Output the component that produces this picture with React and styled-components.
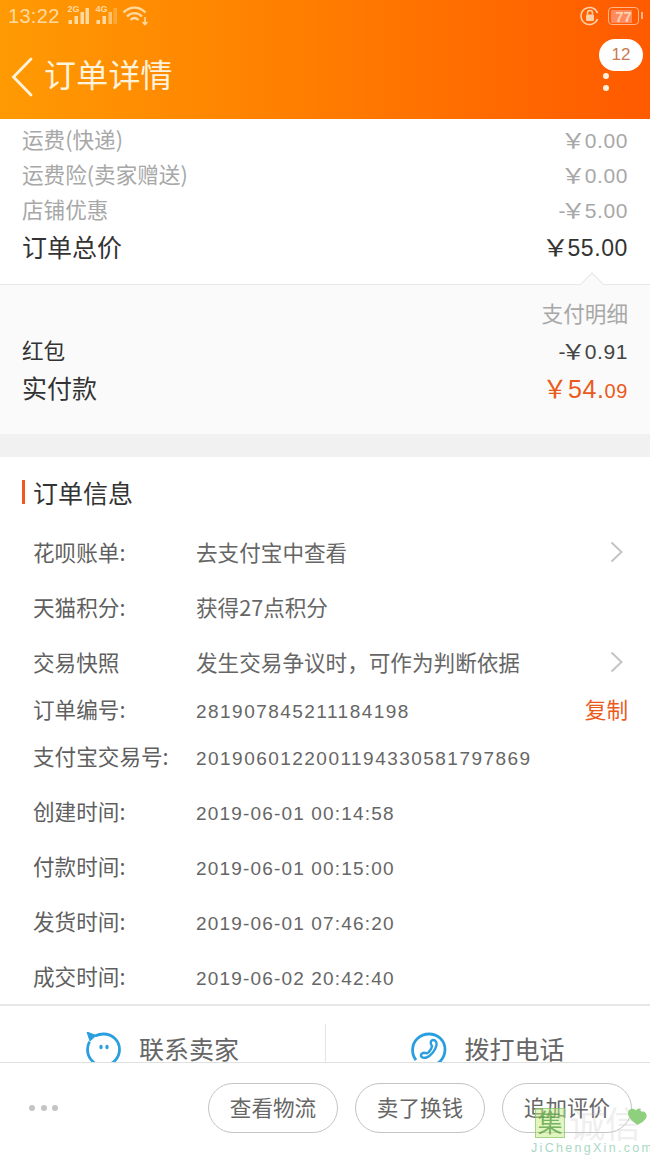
import React from "react";
import styled, { createGlobalStyle } from "styled-components";

const FONT = `"Noto Sans CJK SC", "Liberation Sans", sans-serif`;
const NUM = `"Liberation Sans", "Noto Sans CJK SC", sans-serif`;

const GlobalStyle = createGlobalStyle`
  html, body { margin: 0; padding: 0; background: #fff; }
  body { font-family: ${FONT}; }
`;

const Page = styled.div`
  position: relative;
  width: 650px;
  height: 1155px;
  overflow: hidden;
  display: flex;
  flex-direction: column;
  background: #fff;
`;

const Header = styled.header`
  height: 119px;
  flex: none;
  background: linear-gradient(90deg, #ff9a03 0%, #ff7f00 45%, #ff5a00 100%);
  display: flex;
  flex-direction: column;
  box-sizing: border-box;
`;

const StatusBar = styled.div`
  height: 32px;
  padding: 0 9px 0 8px;
  display: flex;
  align-items: center;
  color: #ffd9a0;
`;

const Clock = styled.span`
  font: 20px ${NUM};
  letter-spacing: 0.3px;
  margin-right: 7px;
`;

const StatusRight = styled.div`
  margin-left: auto;
  display: flex;
  align-items: center;
  gap: 8px;
`;

const Battery = styled.div`
  width: 31px;
  height: 18px;
  margin-right: 2px;
  box-sizing: border-box;
  border: 1.5px solid #ffb48a;
  border-radius: 4px;
  position: relative;
  display: flex;
  align-items: center;
  justify-content: center;
  font: bold 15px ${NUM};
  color: #ffd2ad;
  background: linear-gradient(90deg, #ff8a60 80%, transparent 80%);
  background-clip: content-box;
  padding: 1.5px 2px;
  &::after {
    content: "";
    position: absolute;
    right: -4.5px;
    top: 4px;
    width: 2px;
    height: 7px;
    background: #ffb48a;
  }
`;

const NavBar = styled.div`
  flex: 1;
  display: flex;
  align-items: flex-start;
  padding: 22px 7px 0 11px;
`;

const Back = styled.svg`
  width: 22px;
  height: 40px;
  margin-top: 3px;
  margin-right: 11px;
`;

const Title = styled.h1`
  margin: -3px 0 0;
  font: 400 32px/44px ${FONT};
  color: #fff3dc;
  letter-spacing: 0.2px;
`;

const More = styled.div`
  margin-left: auto;
  width: 44px;
  display: flex;
  flex-direction: column;
  align-items: center;
  margin-top: -15px;
`;

const Badge = styled.div`
  width: 44px;
  height: 32px;
  border-radius: 16px;
  background: #fff;
  color: #c87a55;
  font: 17px/32px ${NUM};
  text-align: center;
`;

const Dot = styled.i`
  display: block;
  width: 6px;
  height: 6px;
  border-radius: 50%;
  background: #fff0dc;
  margin-top: 6px;
  margin-right: 30px;
  &:first-of-type { margin-top: 2px; }
`;

const Main = styled.main`
  flex: 1;
  min-height: 0;
  overflow: hidden;
`;

const Summary = styled.section`
  padding: 2px 22px 0;
  height: 165px;
  box-sizing: border-box;
  background: #fff;
`;

const Row = styled.div`
  height: ${(p) => p.$h || 35}px;
  display: flex;
  align-items: center;
  justify-content: space-between;
  color: ${(p) => p.$color || "#a8a8a8"};
  font: 400 ${(p) => p.$size || 21.6}px ${FONT};
`;

const Amount = styled.span`
  font: ${(p) => p.$size || 21}px ${NUM};
  color: ${(p) => p.$color || "inherit"};
  letter-spacing: 0.6px;
`;

const Yen = styled.span`
  display: inline-block;
  margin-left: -3px;
  transform: scaleX(1.22);
`;

const Cents = styled.small`
  font-size: 20px;
`;

const Detail = styled.section`
  position: relative;
  height: 150px;
  box-sizing: border-box;
  padding: 13px 22px 0;
  background: #fafafa;
  border-top: 1.5px solid #e8e8e8;
  &::before {
    content: "";
    position: absolute;
    right: 49px;
    top: -9px;
    width: 17px;
    height: 17px;
    background: #fafafa;
    border-top: 1.5px solid #e8e8e8;
    border-left: 1.5px solid #e8e8e8;
    transform: rotate(45deg);
  }
`;

const DetailHead = styled.div`
  position: relative;
  height: 35px;
  text-align: right;
  font: 21.6px/30px ${FONT};
  color: #a8a8a8;
`;

const Gap = styled.div`
  height: 23px;
  background: #f1f1f1;
`;

const Info = styled.section`
  background: #fff;
  border-bottom: 2px solid #e8e8e8;
  height: 549px;
  box-sizing: border-box;
`;

const InfoTitle = styled.h2`
  margin: 0;
  height: 69px;
  padding-left: 22px;
  display: flex;
  align-items: center;
  gap: 8px;
  font: 400 25px ${FONT};
  color: #333;
  box-sizing: border-box;
  &::before {
    content: "";
    width: 3px;
    height: 24px;
    background: #f0591a;
  }
`;

const InfoRow = styled.div`
  height: ${(p) => p.$h || 55}px;
  box-sizing: border-box;
  padding: 0 22px 4px 33px;
  display: flex;
  align-items: center;
  color: #666;
  font: 400 21.6px ${FONT};
`;

const Label = styled.span`
  width: 163px;
  flex: none;
  color: #5f5f5f;
  white-space: nowrap;
`;

const Value = styled.span`
  flex: 1;
  white-space: nowrap;
  ${(p) => p.$num && `font: 19px ${NUM}; margin-top: 6px;`}
  ${(p) => p.$num && `letter-spacing: ${p.$date ? 1.17 : 1.47}px;`}
`;

const Arrow = styled.svg`
  width: 16px;
  height: 24px;
  margin-right: 3px;
`;

const Copy = styled.span`
  color: #ea5a1a;
`;

const Contact = styled.section`
  height: 56px;
  display: grid;
  grid-template-columns: 325px 325px;
  background: #fff;
`;

const ContactItem = styled.div`
  margin-top: 18px;
  height: 38px;
  display: flex;
  justify-content: center;
  align-items: flex-start;
  gap: 17px;
  color: #666;
  font: 400 25px ${FONT};
  & + & { border-left: 1px solid #e4e4e4; }
`;

const ContactIcon = styled.svg`
  width: 36px;
  height: 36px;
  flex: none;
  margin-top: 8px;
`;

const ContactText = styled.span`
  margin-top: -1px;
  line-height: 50px;
  height: 50px;
`;

const Toolbar = styled.footer`
  flex: none;
  height: 93px;
  box-sizing: border-box;
  border-top: 1.5px solid #e0e0e0;
  background: #fff;
  display: flex;
  align-items: flex-start;
  padding: 20px 18px 0 29px;
  position: relative;
`;

const Dots = styled.div`
  display: flex;
  gap: 5.500px;
  margin-top: 22px;
  margin-right: auto;
`;

const GreyDot = styled.i`
  width: 6px;
  height: 6px;
  border-radius: 50%;
  background: #c4c4c4;
`;

const Pill = styled.button`
  width: 130px;
  height: 50px;
  margin-left: 17px;
  padding: 0 0 4px;
  border: 1px solid #c4c4c4;
  border-radius: 25px;
  background: #fff;
  color: #666;
  font: 400 21.6px ${FONT};
`;

const Watermark = styled.div`
  position: absolute;
  right: 0;
  bottom: 0;
  width: 118px;
  height: 50px;
  pointer-events: none;
`;

const MarkBox = styled.div`
  position: absolute;
  left: 3px;
  top: 3px;
  width: 30px;
  height: 30px;
  background: rgba(196, 235, 130, 0.5);
  border: 1px solid rgba(120, 190, 90, 0.6);
  box-sizing: border-box;
  color: rgba(90, 160, 70, 0.8);
  font: 25px/24px ${FONT};
  text-align: center;
`;

const MarkText = styled.div`
  position: absolute;
  left: 37px;
  top: -3px;
  font: 36px/40px ${FONT};
  color: rgba(200, 200, 200, 0.3);
  white-space: nowrap;
`;

const MarkUrl = styled.div`
  position: absolute;
  left: -1px;
  bottom: 0;
  font: 12.500px ${NUM};
  letter-spacing: 2.300px;
  color: #a9d8c4;
  white-space: nowrap;
`;

const Leaf = styled.svg`
  position: absolute;
  left: 96px;
  top: 3px;
  width: 19px;
  height: 17px;
`;

const Chevron = () => (
  <Arrow viewBox="0 0 16 24" fill="none">
    <path d="M2.500 2.500 12.500 12 2.500 21.500" stroke="#c4c4c4" strokeWidth="2" />
  </Arrow>
);

const SignalIcon = ({ tag, strong }) => (
  <svg width="28" height="24" viewBox="0 0 28 24">
    <text x="0.500" y="8" fontSize="9" fontWeight="bold" fontFamily="Liberation Sans" fill="#ffd9a0">{tag}</text>
    <rect x="1.500" y="16" width="3.500" height="4" fill="#ffd9a0" />
    <rect x="7.500" y="12" width="3.500" height="8" fill="#ffd9a0" />
    <rect x="13.500" y="8" width="3.500" height="12" fill="#ffd9a0" opacity={strong ? 1 : 0.7} />
    <rect x="18.500" y="4" width="3.500" height="16" fill="#ffd9a0" opacity={strong ? 1 : 0.35} />
  </svg>
);

const WifiIcon = () => (
  <svg width="26" height="20" viewBox="0 0 26 20" fill="none" stroke="#ffd9a0" strokeWidth="2.400">
    <path d="M0.500 6.500C7 0 16 0 22.500 6.500" />
    <path d="M4 10.500c4.500-4.500 10.500-4.500 15 0" />
    <path d="M7.500 14c2.500-2.500 5.500-2.500 8 0" />
    <path d="M22 11v7M19.500 16l2.500 2.500 2.500-2.500" strokeWidth="1.600" />
  </svg>
);

const LockIcon = () => (
  <svg width="20" height="20" viewBox="0 0 20 20" fill="none">
    <path d="M17.500 13A8.500 8.500 0 1 1 17.500 7" stroke="#ffd0a8" strokeWidth="1.600" />
    <rect x="6" y="8.500" width="8" height="6.500" rx="1" fill="#ffd0a8" />
    <path d="M7.500 8.500V7a2.500 2.500 0 0 1 5 0v1.500" stroke="#ffd0a8" strokeWidth="1.500" />
  </svg>
);

const ChatIcon = () => (
  <ContactIcon viewBox="0 0 36 36" fill="none" stroke="#2a9fe0" strokeWidth="2.800">
    <path d="M9 4C11.500 2.800 14.500 2 17.500 2 26.500 2 33.500 9 33.500 17.500S26.500 33.500 17.500 33.500 1.500 26.500 1.500 17.500c0-3 .8-5.500 2-8" />
    <path d="M1 0 10 3.500 4 9Z" fill="#2a9fe0" strokeWidth="1" />
    <ellipse cx="15" cy="15" rx="1.700" ry="2.300" fill="#2a9fe0" stroke="none" />
    <ellipse cx="21" cy="15" rx="1.700" ry="2.300" fill="#2a9fe0" stroke="none" />
  </ContactIcon>
);

const PhoneIcon = () => (
  <ContactIcon viewBox="0 0 36 36" fill="none" stroke="#2a9fe0" strokeWidth="2.800">
    <path d="M5 28C0 22 0.500 12 6.500 6.500c6.500-6 16.500-6 23 0 6 6 6 16 0 22.500-5 5-13 6.500-19 3.500" />
    <path d="M22 8c3 0 4 3 3.500 5-.8 5-5.500 11-10 12.500-2.500.8-5 0-5.500-1.500-.4-1.500 1-3 3-3.200 1.500 0 2 .5 3 .5 2-.5 4.500-4.500 5-7 0-1-1-1.500-1.200-3C19.500 9.500 20.500 8 22 8Z" strokeWidth="2.400" />
  </ContactIcon>
);

const infoRows = [
  { label: "花呗账单:", value: "去支付宝中查看", arrow: true },
  { label: "天猫积分:", value: "获得27点积分" },
  { label: "交易快照", value: "发生交易争议时，可作为判断依据", arrow: true },
  { label: "订单编号:", value: "281907845211184198", num: true, copy: true, h: 39 },
  { label: "支付宝交易号:", value: "2019060122001194330581797869", num: true },
  { label: "创建时间:", value: "2019-06-01 00:14:58", num: true, date: true },
  { label: "付款时间:", value: "2019-06-01 00:15:00", num: true, date: true },
  { label: "发货时间:", value: "2019-06-01 07:46:20", num: true, date: true },
  { label: "成交时间:", value: "2019-06-02 20:42:40", num: true, date: true },
];

export default function App() {
  return (
    <Page>
      <GlobalStyle />
      <Header>
        <StatusBar>
          <Clock>13:22</Clock>
          <SignalIcon tag="2G" strong />
          <SignalIcon tag="4G" />
          <WifiIcon />
          <StatusRight>
            <LockIcon />
            <Battery>77</Battery>
          </StatusRight>
        </StatusBar>
        <NavBar>
          <Back viewBox="0 0 22 40" fill="none">
            <path d="M20 2 2.500 20 20 38" stroke="#fff3dc" strokeWidth="2.800" strokeLinecap="round" />
          </Back>
          <Title>订单详情</Title>
          <More>
            <Badge>12</Badge>
            <Dot />
            <Dot />
          </More>
        </NavBar>
      </Header>
      <Main>
        <Summary>
          <Row>运费(快递)<Amount><Yen>￥</Yen>0.00</Amount></Row>
          <Row>运费险(卖家赠送)<Amount><Yen>￥</Yen>0.00</Amount></Row>
          <Row>店铺优惠<Amount>-<Yen>￥</Yen>5.00</Amount></Row>
          <Row $h={40} $color="#333" $size={25}>订单总价<Amount $size={23} $color="#333"><Yen>￥</Yen>55.00</Amount></Row>
        </Summary>
        <Detail>
          <DetailHead>支付明细</DetailHead>
          <Row $color="#333" $h={33}>红包<Amount $color="#444">-<Yen>￥</Yen>0.91</Amount></Row>
          <Row $color="#333" $size={25} $h={42}>实付款<Amount $size={25} $color="#ea5a1a">￥54.<Cents>09</Cents></Amount></Row>
        </Detail>
        <Gap />
        <Info>
          <InfoTitle>订单信息</InfoTitle>
          {infoRows.map((r) => (
            <InfoRow key={r.label} $h={r.h}>
              <Label>{r.label}</Label>
              <Value $num={r.num} $date={r.date}>{r.value}</Value>
              {r.arrow && <Chevron />}
              {r.copy && <Copy>复制</Copy>}
            </InfoRow>
          ))}
        </Info>
        <Contact>
          <ContactItem><ChatIcon /><ContactText>联系卖家</ContactText></ContactItem>
          <ContactItem><PhoneIcon /><ContactText>拨打电话</ContactText></ContactItem>
        </Contact>
      </Main>
      <Toolbar>
        <Dots><GreyDot /><GreyDot /><GreyDot /></Dots>
        <Pill>查看物流</Pill>
        <Pill>卖了换钱</Pill>
        <Pill>追加评价</Pill>
      </Toolbar>
      <Watermark>
        <MarkBox>集</MarkBox>
        <MarkText>诚信</MarkText>
        <Leaf viewBox="0 0 19 17">
          <path d="M9.500 17C4 13 0 9.500 0 5c0-4 5-6 8-2.500C9 1 11 0 13 1c-2 2 1 3 3 2.500 3 2 3.500 5 1 8-2 2.500-5 4-7.500 5.500Z" fill="#8fd07e" />
        </Leaf>
        <MarkUrl>JiChengXin.com</MarkUrl>
      </Watermark>
    </Page>
  );
}
